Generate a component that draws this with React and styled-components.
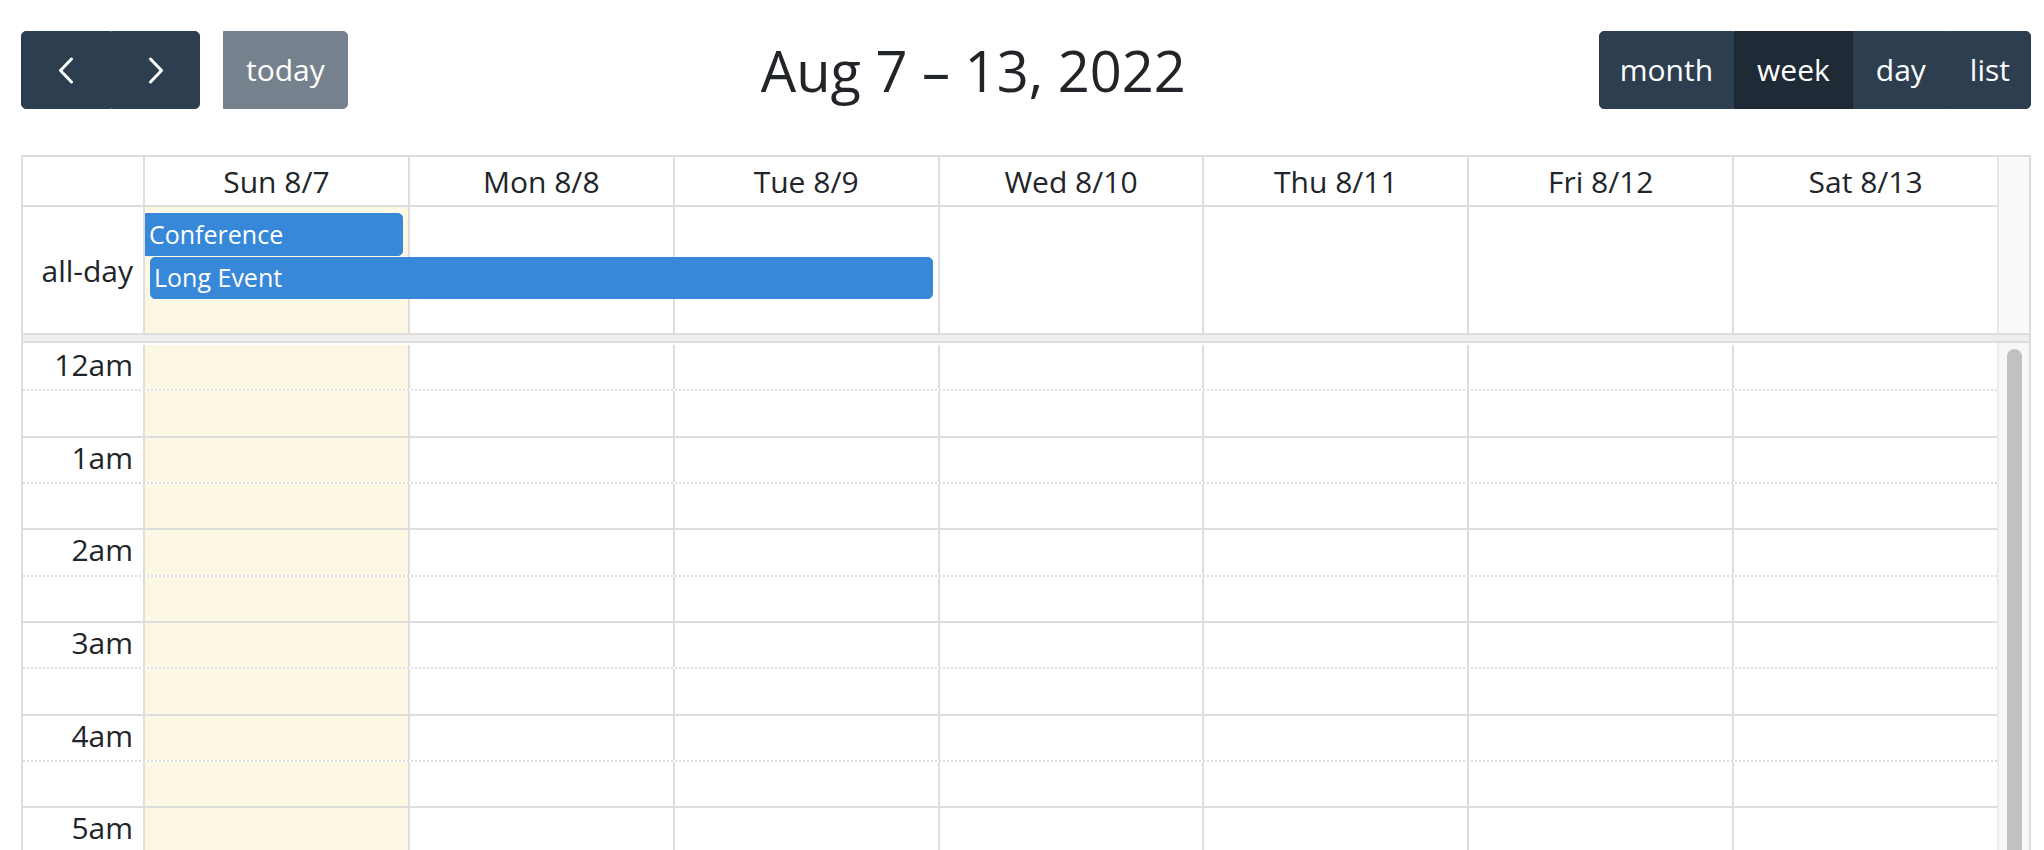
import React from "react";
import styled, { createGlobalStyle } from "styled-components";

const GlobalStyle = createGlobalStyle`
  html, body {
    margin: 0;
    padding: 0;
    background: #fff;
  }
  body {
    font-family: "Open Sans", "Noto Sans", sans-serif;
    color: #212529;
  }
  * {
    box-sizing: border-box;
  }
`;

const Page = styled.div`
  height: 850px;
  overflow: hidden;
  padding: 31px 13px 0 21px;
`;

const Toolbar = styled.div`
  display: flex;
  align-items: center;
  justify-content: space-between;
  height: 78px;
  margin-bottom: 46px;
`;

const Chunk = styled.div`
  display: flex;
  align-items: center;
  gap: 23px;
`;

const ButtonGroup = styled.div`
  display: flex;
`;

const Button = styled.button`
  height: 78px;
  width: ${(p) => (p.$width ? `${p.$width}px` : "auto")};
  padding: 0 ${(p) => (p.$width ? 0 : p.$pad || 21)}px;
  display: flex;
  align-items: center;
  justify-content: center;
  font-family: inherit;
  font-size: 30px;
  line-height: 1;
  color: #fff;
  background: ${(p) => (p.$active ? "#1e2b37" : "#2c3e50")};
  border: 1px solid ${(p) => (p.$active ? "#1a252f" : "#2c3e50")};
  border-radius: 0;
  opacity: ${(p) => (p.$disabled ? 0.65 : 1)};
  cursor: pointer;

  &:first-child {
    border-top-left-radius: 5px;
    border-bottom-left-radius: 5px;
  }
  &:last-child {
    border-top-right-radius: 5px;
    border-bottom-right-radius: 5px;
  }
`;

const Title = styled.h2`
  margin: 0;
  font-size: 56px;
  font-weight: 400;
  line-height: 1;
  color: #212529;
`;

const Calendar = styled.div`
  border: 2px solid #ddd;
  border-bottom: none;
`;

// header + all-day share one grid so the gutter can span both
const TopGrid = styled.div`
  display: grid;
  grid-template-columns: 120px repeat(7, 1fr) 32px;
  grid-template-rows: 50px 6px 43px 43px 34px;
`;

const HeadCell = styled.div`
  grid-row: 1;
  grid-column: ${(p) => p.$col};
  display: flex;
  align-items: center;
  justify-content: center;
  font-size: 30px;
  border-bottom: 2px solid #ddd;
  border-left: ${(p) => (p.$col > 1 ? "2px solid #ddd" : "none")};
`;

const Gutter = styled.div`
  grid-column: 9;
  grid-row: 1 / -1;
  background: #fafafa;
  border-left: 2px solid #e6e6e6;
`;

const AllDayLabel = styled.div`
  grid-column: 1;
  grid-row: 2 / -1;
  display: flex;
  align-items: center;
  justify-content: flex-end;
  padding-right: 10px;
  font-size: 30px;
`;

const AllDayCell = styled.div`
  grid-column: ${(p) => p.$col};
  grid-row: 2 / -1;
  border-left: 2px solid #ddd;
  background: ${(p) => (p.$today ? "#fdf8e3" : "#fff")};
`;

const Event = styled.div`
  grid-column: ${(p) => p.$span};
  grid-row: ${(p) => p.$row};
  margin: ${(p) => p.$margin};
  display: flex;
  align-items: center;
  padding: 0 3px 2px;
  background: #3788d8;
  border: 1px solid #3788d8;
  border-radius: ${(p) => (p.$continues ? "0 5px 5px 0" : "5px")};
  color: #fff;
  font-size: 25px;
  white-space: nowrap;
  overflow: hidden;
  z-index: 1;
`;

const Divider = styled.div`
  height: 10px;
  background: #eee;
  border-top: 2px solid #ddd;
  border-bottom: 2px solid #ddd;
`;

const Body = styled.div`
  display: flex;
  height: 540px;
  overflow: hidden;
`;

const Slots = styled.div`
  flex: 1;
`;

const SlotRow = styled.div`
  display: grid;
  grid-template-columns: 120px repeat(7, 1fr);
  height: 46.33px;
  border-top: 2px ${(p) => (p.$minor ? "dotted" : "solid")}
    ${(p) => (p.$first ? "transparent" : "#ddd")};
`;

const SlotLabel = styled.div`
  text-align: right;
  padding-right: 10px;
  font-size: 30px;
  line-height: 40px;
`;

const SlotLane = styled.div`
  border-left: 2px solid #ddd;
  background: ${(p) => (p.$today ? "#fdf8e3" : "transparent")};
`;

const ScrollTrack = styled.div`
  width: 32px;
  display: flex;
  justify-content: center;
  padding-top: 6px;
  background: #f7f7f7;
  border-left: 2px solid #ececec;
`;

const Thumb = styled.div`
  width: 15px;
  height: 720px;
  border-radius: 8px;
  background: #c1c1c1;
`;

const Chevron = ({ dir }) => (
  <svg width="16" height="27" viewBox="0 0 16 27" fill="none">
    <polyline
      points={dir === "left" ? "13.5,2 2.5,13.5 13.5,25" : "2.5,2 13.5,13.5 2.5,25"}
      stroke="#fff"
      strokeWidth="3"
      strokeLinecap="round"
      strokeLinejoin="round"
    />
  </svg>
);

const days = ["Sun 8/7", "Mon 8/8", "Tue 8/9", "Wed 8/10", "Thu 8/11", "Fri 8/12", "Sat 8/13"];
const hours = ["12am", "1am", "2am", "3am", "4am", "5am", "6am"];

const App = () => {
  const slots = [];
  hours.forEach((h, i) => {
    slots.push({ label: h, minor: false, first: i === 0 });
    slots.push({ label: "", minor: true, first: false });
  });

  return (
    <Page>
      <GlobalStyle />
      <Toolbar>
        <Chunk>
          <ButtonGroup>
            <Button $width={90} aria-label="prev">
              <Chevron dir="left" />
            </Button>
            <Button $width={89} aria-label="next">
              <Chevron dir="right" />
            </Button>
          </ButtonGroup>
          <Button $disabled $pad={22}>today</Button>
        </Chunk>
        <Title>Aug 7 – 13, 2022</Title>
        <ButtonGroup>
          <Button $pad={20}>month</Button>
          <Button $active $pad={22}>week</Button>
          <Button $pad={22}>day</Button>
          <Button $pad={20}>list</Button>
        </ButtonGroup>
      </Toolbar>

      <Calendar>
        <TopGrid>
          <HeadCell $col={1} />
          {days.map((d, i) => (
            <HeadCell key={d} $col={i + 2}>
              {d}
            </HeadCell>
          ))}
          <Gutter />
          <AllDayLabel>all-day</AllDayLabel>
          {days.map((d, i) => (
            <AllDayCell key={d} $col={i + 2} $today={i === 0} />
          ))}
          <Event $span="2 / 3" $row={3} $margin="0 5px 0 2px" $continues>
            Conference
          </Event>
          <Event $span="2 / 5" $row={4} $margin="1px 5px 0 7px">
            Long Event
          </Event>
        </TopGrid>
        <Divider />
        <Body>
          <Slots>
            {slots.map((s, i) => (
              <SlotRow key={i} $minor={s.minor} $first={s.first}>
                <SlotLabel>{s.label}</SlotLabel>
                {days.map((d, j) => (
                  <SlotLane key={d} $today={j === 0} />
                ))}
              </SlotRow>
            ))}
          </Slots>
          <ScrollTrack>
            <Thumb />
          </ScrollTrack>
        </Body>
      </Calendar>
    </Page>
  );
};

export default App;
